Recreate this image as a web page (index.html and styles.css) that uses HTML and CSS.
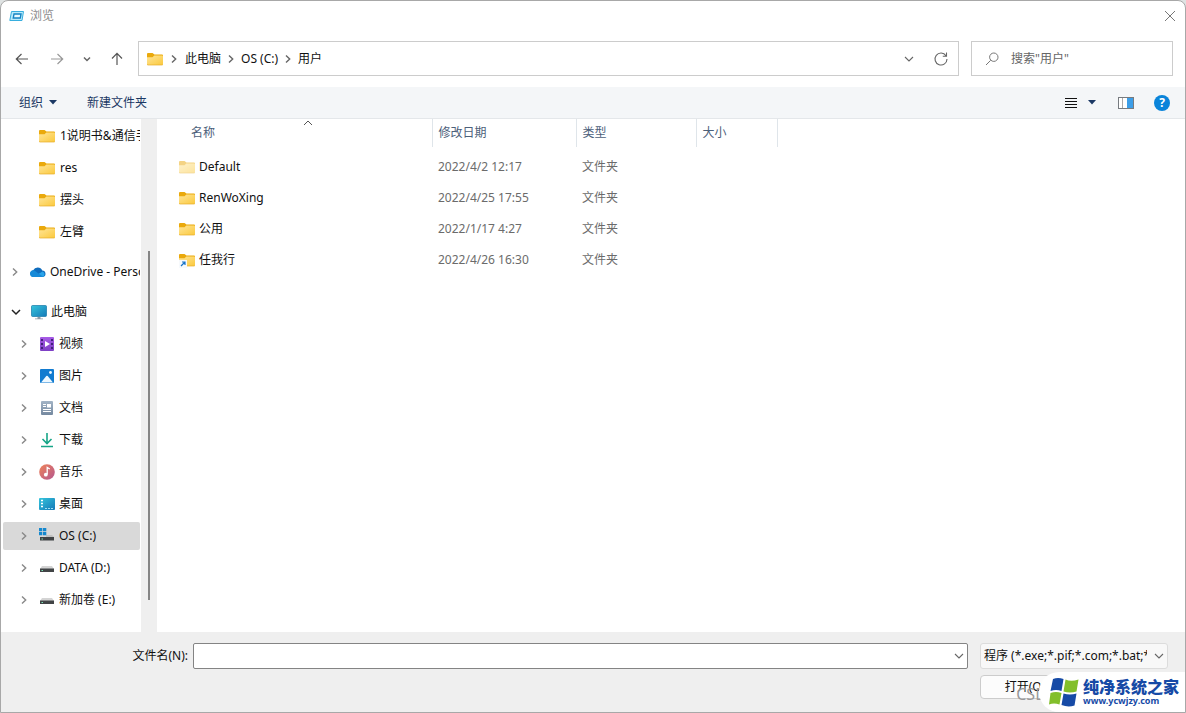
FILE: index.html
```html
<!DOCTYPE html>
<html lang="zh-CN">
<head>
<meta charset="utf-8">
<title>浏览</title>
<link rel="stylesheet" href="styles.css">
</head>
<body>
<svg class="defs" aria-hidden="true">
  <defs>
    <linearGradient id="gFolder" x1="0" y1="0" x2="1" y2="1"><stop offset="0" stop-color="#ffe598"/><stop offset="1" stop-color="#fbc93d"/></linearGradient>
    <linearGradient id="gScreen" x1="0" y1="0" x2="1" y2="1"><stop offset="0" stop-color="#35c5dc"/><stop offset="1" stop-color="#1479b8"/></linearGradient>
    <linearGradient id="gVideo" x1="0" y1="0" x2="0" y2="1"><stop offset="0" stop-color="#a75be6"/><stop offset="1" stop-color="#7d3fc4"/></linearGradient>
    <linearGradient id="gMusic" x1="0" y1="0" x2="1" y2="1"><stop offset="0" stop-color="#ef8358"/><stop offset="1" stop-color="#b4568f"/></linearGradient>
    <linearGradient id="gDoc" x1="0" y1="0" x2="0" y2="1"><stop offset="0" stop-color="#a3b4c6"/><stop offset="1" stop-color="#74889f"/></linearGradient>
    <symbol id="folder" viewBox="0 0 16 16"><path d="M0 3Q0 2 1 2H5.500L7.500 3.500H15Q16 3.500 16 4.500V8H0Z" fill="#eaa90c"/><path d="M0 6.200H5.500L7.300 4.500H15Q16 4.500 16 5.500V13Q16 14 15 14H1Q0 14 0 13Z" fill="url(#gFolder)"/><path d="M0 13Q0 14 1 14H15Q16 14 16 13.200" fill="none" stroke="#e6ae2a" stroke-width=".7"/></symbol>
    <symbol id="right" viewBox="0 0 8 10"><path d="M2 1.500 5.700 5 2 8.500" fill="none" stroke="currentColor" stroke-width="1.400"/></symbol>
    <symbol id="down" viewBox="0 0 10 8"><path d="M1 2 5 6 9 2" fill="none" stroke="currentColor" stroke-width="1.100"/></symbol>
    <symbol id="tri" viewBox="0 0 8 5"><path d="M0 0H8L4 4.500Z" fill="#1b3864"/></symbol>
    <symbol id="cloud" viewBox="0 0 16 16"><path d="M3.500 13A3.400 3.400 0 0 1 3.200 6.300 5 5 0 0 1 12.300 6.500 3.300 3.300 0 0 1 13 13Z" fill="#0f6cbd"/><path d="M3.500 13 12.500 7.500A3 3 0 0 1 13 13Z" fill="#2aa4ea"/><path d="M0 10A3.400 3.400 0 0 1 4 6.200L13.500 12.900H3.500A3.300 3.300 0 0 1 0 10Z" fill="#168ad8"/></symbol>
    <symbol id="pc" viewBox="0 0 16 16"><rect x=".5" y="1.500" width="15" height="11" rx="1" fill="url(#gScreen)" stroke="#1679a7" stroke-width=".7"/><path d="M6.500 13H9.500V14.500H12V15.300H4V14.500H6.500Z" fill="#8d9ba6"/></symbol>
    <symbol id="video" viewBox="0 0 16 16"><rect x="1" y="1" width="14" height="14" rx="1" fill="url(#gVideo)"/><path d="M2 3H4V5H2ZM2 7H4V9H2ZM2 11H4V13H2ZM12 3H14V5H12ZM12 7H14V9H12ZM12 11H14V13H12Z" fill="#42217b"/><path d="M6 5 11 8 6 11Z" fill="#fff"/></symbol>
    <symbol id="image" viewBox="0 0 16 16"><rect x="1" y="1" width="14" height="14" rx="1" fill="#117bd0"/><path d="M2 14.500 7.300 8Q8 7.400 8.700 8L14 14.500Z" fill="#eef8ff"/><circle cx="11.500" cy="4.500" r="1.400" fill="#eef8ff"/></symbol>
    <symbol id="doc" viewBox="0 0 16 16"><rect x="2" y="1" width="12" height="14" rx="1" fill="url(#gDoc)"/><path d="M4 4.500H7M4 6.500H7M4 9.500H12M4 11.500H12" stroke="#fff"/><rect x="8" y="4" width="4" height="3.500" fill="#fff"/></symbol>
    <symbol id="download" viewBox="0 0 16 16"><path d="M8 1V11M3.500 7 8 11.500 12.500 7M2 14.500H14" fill="none" stroke="#16a587" stroke-width="1.600"/></symbol>
    <symbol id="music" viewBox="0 0 16 16"><circle cx="8" cy="8" r="7.800" fill="url(#gMusic)"/><circle cx="6.800" cy="10.700" r="1.900" fill="#fff"/><path d="M8.200 10.500V3.500L10.800 5" fill="none" stroke="#fff" stroke-width="1.300"/></symbol>
    <symbol id="desktop" viewBox="0 0 16 16"><rect y="2" width="16" height="12" rx="1" fill="url(#gScreen)"/><path d="M2 4.500H4M2 7.500H4M2 10.500H4" stroke="#fff" stroke-width="1.300"/><path d="M6 12.500H14" stroke="#9fdff2" stroke-dasharray="2 1"/></symbol>
    <symbol id="disk" viewBox="0 0 16 16"><path d="M3 6H13L15 9H1Z" fill="#d4d4d4"/><rect x="1" y="8.500" width="14" height="3.500" fill="#414446"/><path d="M2.500 10.500H4" stroke="#7ce0b5"/></symbol>
    <symbol id="osdisk" viewBox="0 0 16 16"><path d="M7 7H13L15 9H7Z" fill="#c1c1c1"/><rect x="1" y="9" width="14" height="3.500" fill="#414446"/><path d="M2.500 11H4" stroke="#7ce0b5"/><path d="M0 0H3.300V3.300H0ZM4 0H7.300V3.300H4ZM0 4H3.300V7.300H0ZM4 4H7.300V7.300H4Z" fill="#1588ce"/></symbol>
  </defs>
</svg>
<main class="window">
  <header class="titlebar">
    <svg class="icon16" viewBox="0 0 16 16"><path d="M2.500 3.500H14.500L13 12.500H.8Z" fill="#b9eafa" stroke="#37aede"/><path d="M5 6H12L11.300 10H4.300Z" fill="#eafaff" stroke="#1584c4" stroke-width="1.400"/></svg>
    <h1 class="title">浏览</h1>
    <button class="plain" aria-label="关闭"><svg class="icon12" viewBox="0 0 12 12"><path d="M1 1 11 11M11 1 1 11" stroke="#777" fill="none"/></svg></button>
  </header>
  <nav class="navbar">
    <div class="history">
      <button class="plain" aria-label="后退"><svg class="icon16" viewBox="0 0 16 16"><path d="M14 8H2.500M7.500 3 2.300 8 7.500 13" fill="none" stroke="#555" stroke-width="1.200"/></svg></button>
      <button class="plain" aria-label="前进"><svg class="icon16" viewBox="0 0 16 16"><path d="M2 8H13.500M8.500 3 13.700 8 8.500 13" fill="none" stroke="#999" stroke-width="1.200"/></svg></button>
      <button class="plain" aria-label="最近位置"><svg class="chev-tiny" viewBox="0 0 10 8"><path d="M2 2.500 5 5.500 8 2.500" fill="none" stroke="#666" stroke-width="1.500"/></svg></button>
      <button class="plain" aria-label="向上"><svg class="icon16" viewBox="0 0 16 16"><path d="M8 14V2.500M3 7.500 8 2.300 13 7.500" fill="none" stroke="#555" stroke-width="1.200"/></svg></button>
    </div>
    <div class="address">
      <svg class="icon16"><use href="#folder"/></svg>
      <svg class="chev"><use href="#right"/></svg>
      <a href="#pc">此电脑</a>
      <svg class="chev"><use href="#right"/></svg>
      <a href="#c">OS (C:)</a>
      <svg class="chev"><use href="#right"/></svg>
      <a href="#users">用户</a>
      <span class="grow"></span>
      <button class="plain" aria-label="展开"><svg class="chev-down"><use href="#down"/></svg></button>
      <button class="plain refresh" aria-label="刷新"><svg class="icon16" viewBox="0 0 16 16"><path d="M13 4.700A6 6 0 1 0 14 8M13.500 1.500V5.200H9.800" fill="none" stroke="#666" stroke-width="1.100"/></svg></button>
    </div>
    <label class="search">
      <svg class="icon16" viewBox="0 0 16 16"><circle cx="9.800" cy="6.200" r="4.200" fill="none" stroke="#777"/><path d="M6.700 9.300 2 14" stroke="#777"/></svg>
      <input type="search" aria-label="搜索" placeholder='搜索"用户"'>
    </label>
  </nav>
  <div class="toolbar">
    <button class="plain tool">组织<svg class="tri"><use href="#tri"/></svg></button>
    <button class="plain tool">新建文件夹</button>
    <span class="grow"></span>
    <button class="plain view" aria-label="更改视图"><svg class="icon12" viewBox="0 0 12 12"><path d="M0 1.500H12M0 4.500H12M0 7.500H12M0 10.500H12" stroke="#111"/></svg><svg class="tri"><use href="#tri"/></svg></button>
    <button class="plain" aria-label="预览窗格"><svg class="icon16" viewBox="0 0 16 16"><rect x=".5" y="2.500" width="15" height="11" fill="#fff" stroke="#777b80"/><path d="M4.500 3V13" stroke="#aaa"/><rect x="9" y="3" width="6" height="10" fill="#3c9ee8"/></svg></button>
    <button class="help" aria-label="帮助">?</button>
  </div>
  <section class="content">
    <aside class="tree">
      <a class="node deep" href="#n1"><svg class="icon16"><use href="#folder"/></svg><span>1说明书&amp;通信手册</span></a>
      <a class="node deep" href="#n2"><svg class="icon16"><use href="#folder"/></svg><span>res</span></a>
      <a class="node deep" href="#n3"><svg class="icon16"><use href="#folder"/></svg><span>摆头</span></a>
      <a class="node deep" href="#n4"><svg class="icon16"><use href="#folder"/></svg><span>左臂</span></a>
      <a class="node top" href="#od"><svg class="chev"><use href="#right"/></svg><svg class="icon16"><use href="#cloud"/></svg><span>OneDrive - Personal</span></a>
      <a class="node top" href="#pc"><svg class="chev-open" viewBox="0 0 10 8"><path d="M1 2 5 6 9 2" fill="none" stroke="#222" stroke-width="1.500"/></svg><svg class="icon16"><use href="#pc"/></svg><span>此电脑</span></a>
      <a class="node" href="#v"><svg class="chev"><use href="#right"/></svg><svg class="icon16"><use href="#video"/></svg><span>视频</span></a>
      <a class="node" href="#i"><svg class="chev"><use href="#right"/></svg><svg class="icon16"><use href="#image"/></svg><span>图片</span></a>
      <a class="node" href="#d"><svg class="chev"><use href="#right"/></svg><svg class="icon16"><use href="#doc"/></svg><span>文档</span></a>
      <a class="node" href="#dl"><svg class="chev"><use href="#right"/></svg><svg class="icon16"><use href="#download"/></svg><span>下载</span></a>
      <a class="node" href="#m"><svg class="chev"><use href="#right"/></svg><svg class="icon16"><use href="#music"/></svg><span>音乐</span></a>
      <a class="node" href="#dt"><svg class="chev"><use href="#right"/></svg><svg class="icon16"><use href="#desktop"/></svg><span>桌面</span></a>
      <a class="node selected" href="#c"><svg class="chev"><use href="#right"/></svg><svg class="icon16"><use href="#osdisk"/></svg><span>OS (C:)</span></a>
      <a class="node" href="#dd"><svg class="chev"><use href="#right"/></svg><svg class="icon16"><use href="#disk"/></svg><span>DATA (D:)</span></a>
      <a class="node" href="#e"><svg class="chev"><use href="#right"/></svg><svg class="icon16"><use href="#disk"/></svg><span>新加卷 (E:)</span></a>
    </aside>
    <div class="scrollbar"><div class="thumb"></div></div>
    <div class="files">
      <table>
        <colgroup><col class="c-name"><col class="c-date"><col class="c-type"><col class="c-size"></colgroup>
        <thead><tr>
          <th>名称<svg class="sort" viewBox="0 0 10 8"><path d="M1 6 5 2 9 6" fill="none" stroke="#555"/></svg></th>
          <th>修改日期</th><th>类型</th><th>大小</th>
        </tr></thead>
        <tbody>
          <tr><td><div class="file"><svg class="icon16 faded"><use href="#folder"/></svg>Default</div></td><td>2022/4/2 12:17</td><td>文件夹</td><td></td></tr>
          <tr><td><div class="file"><svg class="icon16"><use href="#folder"/></svg>RenWoXing</div></td><td>2022/4/25 17:55</td><td>文件夹</td><td></td></tr>
          <tr><td><div class="file"><svg class="icon16"><use href="#folder"/></svg>公用</div></td><td>2022/1/17 4:27</td><td>文件夹</td><td></td></tr>
          <tr><td><div class="file"><svg class="icon16" viewBox="0 0 16 16"><use href="#folder"/><rect y="8" width="8" height="8" fill="#f6f9fc"/><path d="M2 14 6 10M3 10H6V13" fill="none" stroke="#1673c9" stroke-width="1.200"/></svg>任我行</div></td><td>2022/4/26 16:30</td><td>文件夹</td><td></td></tr>
        </tbody>
      </table>
    </div>
  </section>
  <footer class="footer">
    <label class="fname" for="fname">文件名(N):</label>
    <div class="combo"><input id="fname" type="text"><button class="plain" aria-label="历史文件名"><svg class="chev-down"><use href="#down"/></svg></button></div>
    <div class="filter"><select aria-label="文件类型"><option>程序 (*.exe;*.pif;*.com;*.bat;*.cmd)</option></select><svg class="chev-down"><use href="#down"/></svg></div>
    <button class="open">打开(O)</button>
  </footer>
  <span class="csdn">CSDN</span>
  <div class="badge">
    <svg class="logo" viewBox="0 0 30 30"><path d="M4 2Q9 0 14.500 2L12.500 14Q7 12 1.500 14Z" fill="#164aa6"/><path d="M16.500 2.500Q22 5 29.500 2.500L27.500 14.500Q21 16.500 14.500 14.500Z" fill="#82bf2b"/><path d="M1.500 16Q7 14 12.500 16L10.500 27.500Q5 25.500 0 27.500Z" fill="#82bf2b"/><path d="M14.500 16.500Q21 18.500 27.500 16.500L25.500 28.500Q19 30.500 12.500 28Z" fill="#164aa6"/></svg>
    <div class="brand"><strong>纯净系统之家</strong><span>www.ycwjzy.com</span></div>
  </div>
</main>
</body>
</html>
```
FILE: styles.css
```css
* { box-sizing: border-box; }
body, button, input, select { font-family: "Noto Sans", "Noto Sans CJK SC", sans-serif; font-size: 12px; line-height: 16px; }
body { margin: 0; background: #dfe3e3; color: #111; }
a { color: inherit; text-decoration: none; }
svg { display: block; flex: none; }
.defs { position: absolute; width: 0; height: 0; }
.plain { display: flex; align-items: center; justify-content: center; padding: 0; border: 0; background: none; color: #666; }
.icon16 { width: 16px; height: 16px; }
.icon12 { width: 12px; height: 12px; }
.chev { width: 8px; height: 10px; color: #666; }
.chev-down, .chev-open { width: 10px; height: 8px; }
.chev-tiny { width: 10px; height: 8px; }
.tri { width: 8px; height: 5px; }
.grow { flex: 1; }

.window { position: relative; display: flex; flex-direction: column; height: 100vh; border: 1px solid #a8a8a8; border-radius: 8px 8px 0 0; background: #fff; overflow: hidden; }
.titlebar { display: flex; align-items: center; gap: 5px; height: 29px; padding: 0 9px 0 8px; }
.title { flex: 1; margin: 0; font-size: 12px; font-weight: 400; color: #8c8c8c; }

.navbar { display: flex; align-items: center; padding: 11px 12px 11px 13px; }
.history { display: flex; align-items: center; width: 124px; gap: 19px; }
.history .chev-tiny { margin: 0 -2px; }
.address { display: flex; flex: 1; align-items: center; gap: 9px; height: 35px; padding: 0 9px 0 8px; border: 1px solid #ccc; }
.address .chev { margin: 0 -3px; }
.address .icon16 + .chev { margin: 0 -2px; }
.refresh { margin-left: 10px; }
.search { display: flex; align-items: center; gap: 11px; width: 202px; height: 35px; margin-left: 12px; padding: 0 12px; border: 1px solid #ccc; }
.search input { flex: 1; min-width: 0; padding: 0; border: 0; outline: 0; background: none; }
.search input::placeholder { color: #666; opacity: 1; }

.toolbar { display: flex; align-items: center; gap: 22px; height: 32px; padding: 0 15px 0 18px; border-bottom: 1px solid #e4e7ea; background: #f4f6f8; }
.tool { gap: 6px; margin-right: 8px; color: #1b3864; }
.view { gap: 11px; }
.help { width: 16px; height: 16px; margin-left: -2px; padding: 0; border: 0; border-radius: 50%; background: #0a84da; color: #fff; font-weight: 700; }

.content { display: flex; flex: 1; min-height: 0; }
.tree { display: flex; flex-direction: column; gap: 4px; width: 140px; padding: 3px 1px 0 2px; overflow: hidden; }
.node { display: flex; flex: none; align-items: center; gap: 4px; height: 28px; padding-left: 17px; border-radius: 2px; overflow: hidden; white-space: nowrap; }
.node .chev { margin-right: 7px; color: #888; }
.deep { padding-left: 36px; gap: 5px; }
.deep + .top, .top + .top { margin-top: 8px; }
.top { padding-left: 8px; }
.chev-open { margin-right: 6px; }
.selected { background: #d9d9d9; }
.scrollbar { display: flex; width: 16px; justify-content: center; padding: 132px 0 32px; background: #efefef; }
.thumb { width: 2px; background: #858585; }
.files { flex: 1; min-width: 0; padding-left: 18px; }
table { width: 602px; border-collapse: collapse; table-layout: fixed; color: #6b6b6b; }
.c-name { width: 257px; }
.c-date { width: 144px; }
.c-type { width: 120px; }
.c-size { width: 81px; }
th { position: relative; height: 28px; padding: 0 6px; border-right: 1px solid #dfe5ea; color: #4c607a; font-weight: 400; text-align: left; }
th:first-child { padding-left: 16px; }
.sort { position: absolute; top: 0; left: 50%; width: 10px; height: 8px; }
td { height: 31px; padding: 0 6px; }
td:first-child { padding-left: 4px; color: #111; }
tbody tr:first-child td { height: 35px; padding-top: 4px; }
.file { display: flex; align-items: center; gap: 4px; }
.faded { opacity: .5; }

.footer { display: grid; grid-template-columns: 187px 1fr 188px; grid-template-rows: 26px 24px; column-gap: 5px; row-gap: 6px; height: 80px; padding: 11px 17px 0 0; background: #efefef; }
.fname { align-self: center; text-align: right; }
.combo { display: flex; margin-right: 7px; padding-right: 3px; border: 1px solid #848484; border-radius: 2px; background: #fff; }
.combo input { flex: 1; min-width: 0; border: 0; outline: 0; background: none; }
.filter { position: relative; display: flex; align-items: center; border: 1px solid #dcdcdc; border-radius: 3px; background: #f8f8f8; color: #666; }
.filter select { width: 100%; height: 100%; padding: 0 20px 0 3px; border: 0; appearance: none; background: none; color: #111; }
.filter .chev-down { position: absolute; right: 3px; }
.open { grid-column: 3; width: 90px; border: 1px solid #ccc; border-radius: 4px; background: #fcfcfc; color: #111; }
.csdn { position: absolute; right: 126px; bottom: 8px; color: #999; font-size: 16px; line-height: 20px; }
.badge { position: absolute; right: 0; bottom: 0; display: flex; align-items: center; gap: 4px; height: 40px; padding: 0 6px 0 10px; border-radius: 20px 0 0 20px; background: #fff; }
.logo { width: 30px; height: 30px; }
.brand { display: flex; flex-direction: column; align-items: flex-start; color: #164aa6; }
.brand strong { font-size: 16px; line-height: 18px; font-weight: 900; }
.brand span { font-size: 9px; line-height: 10px; font-weight: 700; }
```
